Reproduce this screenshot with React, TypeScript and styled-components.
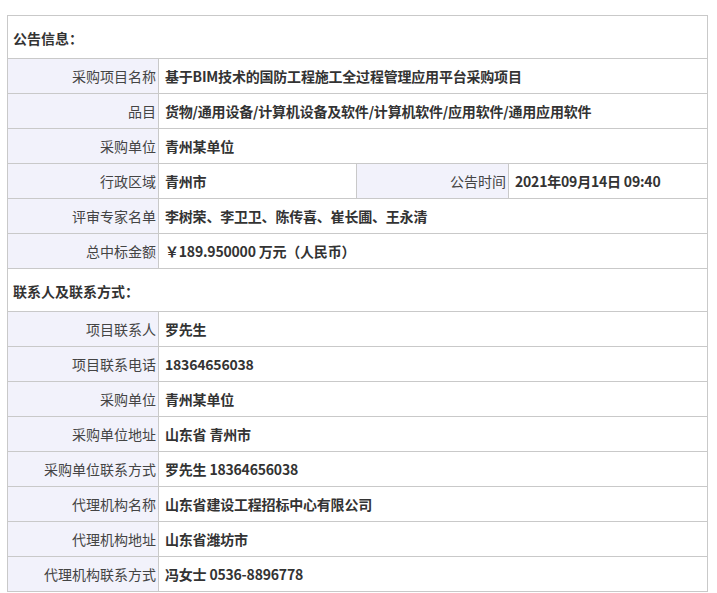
import React from "react";
import styled, { createGlobalStyle } from "styled-components";

const Global = createGlobalStyle`
  body { margin: 0; background: #fff; font-family: "Noto Sans CJK SC", "Noto Sans", sans-serif; color: #333; }
`;

const Wrap = styled.div`padding: 15px 0 0 7px;`;

const Table = styled.table`
  width: 700px;
  border-collapse: collapse;
  font-size: 14px;
  line-height: 16px;
  table-layout: fixed;
`;

const Section = styled.td`
  border: 1px solid #c9c9c9;
  height: 40px;
  padding: 2px 0 0 5px;
  font-weight: bold;
  vertical-align: middle;
`;

const Label = styled.td`
  border: 1px solid #c9c9c9;
  background: #f2f2fb;
  text-align: right;
  padding: 0 2px 0 0;
  height: 34px;
  color: #444;
`;

const Value = styled.td`
  border: 1px solid #c9c9c9;
  padding: 0 0 0 6px;
  height: 34px;
  font-weight: bold;
  color: #333;
  letter-spacing: -0.2px;
`;

type Row = [string, string];

const info: Row[] = [
  ["采购项目名称", "基于BIM技术的国防工程施工全过程管理应用平台采购项目"],
  ["品目", "货物/通用设备/计算机设备及软件/计算机软件/应用软件/通用应用软件"],
  ["采购单位", "青州某单位"],
];
const info2: Row[] = [
  ["评审专家名单", "李树荣、李卫卫、陈传喜、崔长圃、王永清"],
  ["总中标金额", "￥189.950000 万元（人民币）"],
];
const contact: Row[] = [
  ["项目联系人", "罗先生"],
  ["项目联系电话", "18364656038"],
  ["采购单位", "青州某单位"],
  ["采购单位地址", "山东省 青州市"],
  ["采购单位联系方式", "罗先生 18364656038"],
  ["代理机构名称", "山东省建设工程招标中心有限公司"],
  ["代理机构地址", "山东省潍坊市"],
  ["代理机构联系方式", "冯女士 0536-8896778"],
];

const rows = (r: Row[]) =>
  r.map(([l, v]) => (
    <tr key={l + v}>
      <Label>{l}</Label>
      <Value colSpan={3}>{v}</Value>
    </tr>
  ));

export default function App() {
  return (
    <Wrap>
      <Global />
      <Table>
        <colgroup>
          <col style={{ width: 151 }} />
          <col style={{ width: 198 }} />
          <col style={{ width: 152 }} />
          <col style={{ width: 199 }} />
        </colgroup>
        <tbody>
          <tr><Section colSpan={4}>公告信息：</Section></tr>
          {rows(info)}
          <tr>
            <Label>行政区域</Label>
            <Value>青州市</Value>
            <Label>公告时间</Label>
            <Value>2021年09月14日 09:40</Value>
          </tr>
          {rows(info2)}
          <tr><Section colSpan={4}>联系人及联系方式：</Section></tr>
          {rows(contact)}
        </tbody>
      </Table>
    </Wrap>
  );
}
